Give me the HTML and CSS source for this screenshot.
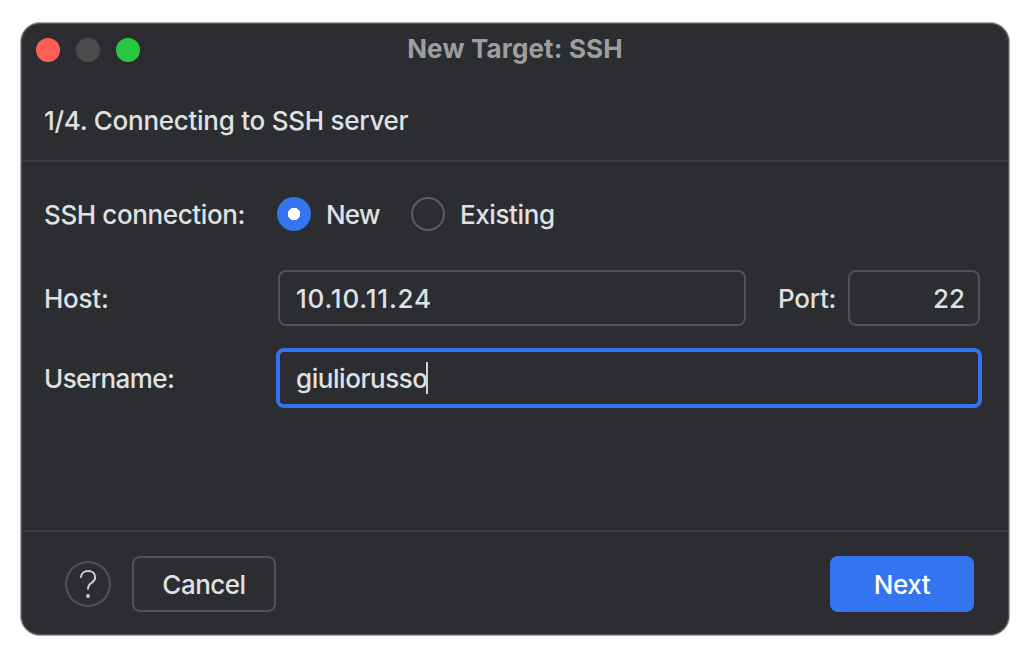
FILE: index.html
```html
<!DOCTYPE html>
<html lang="en"><head><meta charset="utf-8"><title>New Target: SSH</title><link rel="stylesheet" href="styles.css"></head>
<body>
<main class="dialog">
<header class="titlebar"><div class="lights"><i class="red"></i><i class="gray"></i><i class="green"></i></div><h1><span class="t-title">New Target: SSH</span></h1></header>
<div class="step"><span class="t-step">1/4. Connecting to SSH server</span></div>
<section class="form">
<div class="row radios"><span class="label t-conn">SSH connection:</span><span class="radio on"></span><span class="new t-new">New</span><span class="radio"></span><span class="t-existing">Existing</span></div>
<div class="row host"><span class="label t-host">Host:</span><div class="field address"><span class="t-ip">10.10.11.24</span></div><span class="port-label t-port">Port:</span><div class="field port"><span class="t-22">22</span></div></div>
<div class="row user"><span class="label t-user">Username:</span><div class="field focused"><span class="t-name">giuliorusso</span><i class="caret"></i></div></div>
</section>
<footer class="footer"><div class="help"><svg width="20" height="30" viewBox="0 0 20 30" fill="none" stroke="#ced0d6" stroke-width="2" stroke-linecap="round"><path d="M3 8C3.2 4.4 6 2 10 2C14.3 2 17.2 4.5 17.2 8.2C17.2 11.3 15.2 12.7 13 14.3C10.8 15.9 10 17 10 19.8"/><circle cx="10" cy="27" r="1.9" fill="#ced0d6" stroke="none"/></svg></div><div class="button cancel"><span class="t-cancel">Cancel</span></div><div class="button next"><span class="t-next">Next</span></div></footer>
</main>
</body></html>
```
FILE: styles.css
```css
*{box-sizing:border-box}
body{margin:0;width:1030px;height:662px;padding:22px 20px 26px;background:#fff;font-family:Inter,sans-serif;font-size:26px;font-weight:450;color:#dfe1e5;overflow:hidden}
.dialog{width:990px;height:614px;padding:1px;background:#2b2d30;border:1px solid #a4a6a7;box-shadow:inset 0 0 0 1px #56585b;border-radius:20px;display:flex;flex-direction:column;overflow:hidden}
.titlebar{height:52px;flex:none;display:grid;grid-template-columns:1fr auto 1fr;align-items:center}
.lights{display:flex;gap:16px;padding-left:14px}
.lights i{width:24px;height:24px;border-radius:50%}
.red{background:#ff5f57}.gray{background:#4b4c4e}.green{background:#28c840}
h1{margin:0;padding-bottom:3px;font-size:26px;font-weight:700;letter-spacing:.15px;color:#9d9ea0}
.step{height:86px;flex:none;border-bottom:2px solid #393b40;padding:28px 22px 0;line-height:34px;letter-spacing:-.27px}
.form{height:370px;flex:none;padding:26px 26px 0 22px;border-bottom:2px solid #393b40}
.row{display:flex;align-items:center}
.row>span:not(.radio),.field>span,.button>span{padding-top:1px}
.radios{height:52px}
.host{height:56px;margin-top:30px}
.user{height:60px;margin-top:22px}
.label{width:234px;flex:none}
.radios .label{width:233px}
.radio{width:34px;height:34px;border:2px solid #5a5d63;border-radius:50%;margin-right:15px}
.on{border:0;background:radial-gradient(circle,#fff 0 6px,#3574f0 6.5px)}
.new{width:85px}
.field{height:56px;border:2px solid #4e5157;border-radius:8px;display:flex;align-items:center;padding:0 16px}
.address{width:468px}.port-label{width:70px;margin-left:32px}.port{width:132px;justify-content:flex-end;padding-right:13px}
.focused{width:706px;height:60px;margin-left:-2px;border:4px solid #3574f0}
.caret{width:2px;height:32px;margin-left:-2px;background:#ced0d6}
.t-conn{letter-spacing:-.38px}.t-new{letter-spacing:-.8px}.t-existing{letter-spacing:-.4px}
.t-host,.t-port{letter-spacing:-.25px}
.t-ip{letter-spacing:.8px}.t-user{letter-spacing:-.6px}.t-name{letter-spacing:-.45px}
.t-cancel{letter-spacing:-.5px}.t-next{letter-spacing:-.4px}
.footer{height:102px;display:flex;align-items:center;padding:2px 34px 0 43px}
.help{width:46px;height:46px;border:2px solid #4e5157;border-radius:50%;display:grid;place-items:center}
.button{width:144px;height:56px;border-radius:8px;display:grid;place-items:center}
.cancel{border:2px solid #4e5157;margin-left:21px}
.next{background:#3574f0;color:#fff;margin-left:auto}
```
